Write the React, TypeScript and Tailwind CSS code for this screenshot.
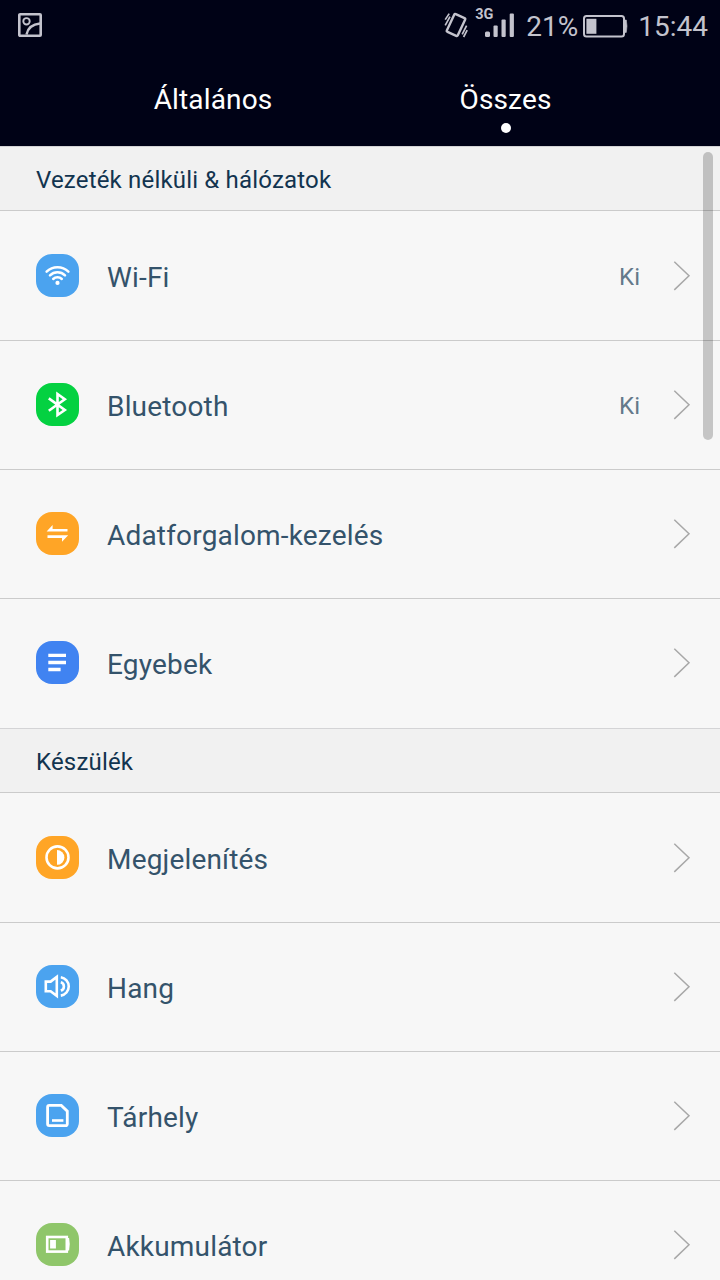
import type { ReactNode } from 'react'

type Item = {
  label: string
  color: string
  icon: ReactNode
  value?: string
}

const wifiIcon = (
  <g fill="none" stroke="#fff" strokeWidth="2.5" strokeLinecap="round">
    <path d="M10.6 17.6a15.6 15.6 0 0 1 21.8 0" />
    <path d="M14 21.4a10.6 10.6 0 0 1 15 0" />
    <path d="M17.2 25a6.2 6.2 0 0 1 8.6 0" />
    <circle cx="21.5" cy="28.9" r="2.1" fill="#fff" stroke="none" />
  </g>
)

const bluetoothIcon = (
  <path
    d="M12.8 15.4 28.8 27 21.5 32V11L28.8 16.2 12.8 27.8"
    fill="none"
    stroke="#fff"
    strokeWidth="2.6"
  />
)

const dataIcon = (
  <path
    d="M10.6 19.6 16.6 13V16.9H31.5V19.6ZM11.5 23.3H32.2L26 29.8V26H11.5Z"
    fill="#fff"
  />
)

const moreIcon = (
  <path d="M12.3 12.7H30v3.4H12.3zM12.3 19.8H30v3.4H12.3zM12.3 26.8H24.6v3.4H12.3z" fill="#fff" />
)

const displayIcon = (
  <g>
    <circle cx="21.5" cy="21.4" r="11" fill="none" stroke="#fff" strokeWidth="2.6" />
    <path d="M21 14a7.4 7.4 0 0 1 0 14.8z" fill="#fff" />
  </g>
)

const soundIcon = (
  <g fill="none" stroke="#fff" strokeWidth="2.6">
    <path d="M9.8 16.6h4.8l6.2-4.7v19l-6.2-4.7H9.8z" />
    <path d="M24.8 12.2a9.3 9.3 0 0 1 0 18.4" />
    <path d="M24.8 17.2a4.4 4.4 0 0 1 0 8.4" />
  </g>
)

const storageIcon = (
  <g fill="none" stroke="#fff">
    <path
      d="M13.2 11.4h12.1l6 5.8v12.9a1.6 1.6 0 0 1-1.6 1.6H13.2a1.6 1.6 0 0 1-1.6-1.6V13a1.6 1.6 0 0 1 1.6-1.6z"
      strokeWidth="2.8"
    />
    <path d="M16 26.5h11.4" strokeWidth="2.6" />
  </g>
)

const batteryIcon = (
  <g>
    <rect x="11.2" y="14" width="19.6" height="14.6" fill="none" stroke="#fff" strokeWidth="2.6" />
    <path d="M14.1 17.1h5.8v8.4h-5.8zM31.3 15h1.8q1.4 6.3 0 12.6h-1.8z" fill="#fff" />
  </g>
)

const sections: { title: string; items: Item[] }[] = [
  {
    title: 'Vezeték nélküli & hálózatok',
    items: [
      { label: 'Wi-Fi', color: 'bg-[#4ba3ef]', icon: wifiIcon, value: 'Ki' },
      { label: 'Bluetooth', color: 'bg-[#04d141]', icon: bluetoothIcon, value: 'Ki' },
      { label: 'Adatforgalom-kezelés', color: 'bg-[#ffa526]', icon: dataIcon },
      { label: 'Egyebek', color: 'bg-[#4083f1]', icon: moreIcon },
    ],
  },
  {
    title: 'Készülék',
    items: [
      { label: 'Megjelenítés', color: 'bg-[#ffa526]', icon: displayIcon },
      { label: 'Hang', color: 'bg-[#4ba3ef]', icon: soundIcon },
      { label: 'Tárhely', color: 'bg-[#4ba3ef]', icon: storageIcon },
      { label: 'Akkumulátor', color: 'bg-[#8fc66a]', icon: batteryIcon },
    ],
  },
]

function StatusBar() {
  return (
    <div className="flex h-[50px] items-center pl-[18px] pr-3 text-[#c3c3cd]">
      <svg className="h-6 w-6" viewBox="0 0 24 24" fill="none" stroke="currentColor">
        <rect x="1.3" y="1.3" width="21.4" height="21.4" rx="0.8" strokeWidth="2.6" />
        <circle cx="8.5" cy="8.3" r="3.2" strokeWidth="1.9" />
        <path d="M8.5 21.5C10 14.8 15 11.2 22 10.6" strokeWidth="2.5" />
      </svg>

      <div className="ml-auto flex items-center">
        {/* Vibrate */}
        <svg className="-mt-px h-[28px] w-[24px]" viewBox="0 0 24 28" fill="none" stroke="currentColor">
          <rect x="6" y="4.2" width="12" height="19.6" rx="1.2" strokeWidth="2.4" transform="rotate(25 12 14)" />
          <path d="M1.2 8.6 5.2 2.6M1.2 14.4 6 5.6M18.2 23.4 22.6 14.6M19.6 26 23.2 19.2" strokeWidth="1.7" />
        </svg>

        {/* Signal */}
        <div className="relative ml-[15px] h-[28px] w-[32px]">
          <span className="absolute -left-[8px] -top-[3px] text-[14.5px] font-bold leading-none">3G</span>
          <svg className="h-[28px] w-[32px]" viewBox="0 0 32 28" fill="currentColor">
            <rect x="2" y="20.5" width="5" height="5.5" rx="1.5" />
            <rect x="10.5" y="14.5" width="4.2" height="11.5" rx="1" />
            <rect x="18.5" y="8.5" width="4.2" height="17.5" rx="1" />
            <rect x="26.7" y="2.5" width="4.2" height="23.5" rx="1" />
          </svg>
        </div>

        <span className="ml-[11px] mt-[4px] w-[57px] text-[28px] leading-8">21%</span>

        <svg className="mt-[2px] h-[23px] w-[45px]" viewBox="0 0 45 23">
          <rect x="1" y="1" width="40" height="20.6" rx="2.5" fill="none" stroke="currentColor" strokeWidth="2" />
          <rect x="3.4" y="3.8" width="10" height="15" fill="currentColor" />
          <path d="M42 5h1.3q1.4 6.2 0 12.4H42z" fill="currentColor" stroke="currentColor" strokeWidth="0.6" />
        </svg>

        <span className="ml-[10px] mt-[4px] text-[28px] leading-8">15:44</span>
      </div>
    </div>
  )
}

function Row({ item }: { item: Item }) {
  return (
    <div className="flex h-[129px] items-start border-t border-[#cbcbcb] pl-9 pr-[29px] pt-[42px] first:border-transparent last:h-[130px]">
      <div className={`h-[43px] w-[43px] rounded-[16px] ${item.color}`}>
        <svg className="h-[43px] w-[43px]" viewBox="0 0 43 43">
          {item.icon}
        </svg>
      </div>
      <span className="ml-7 mt-[2px] text-[28px] leading-[43px] tracking-[0.18px] text-[#34536b]">{item.label}</span>
      <span className="ml-auto mt-[2px] text-[24px] leading-[43px] text-[#64798a]">{item.value}</span>
      <svg
        className="ml-[33px] mt-[6px] h-[31px] w-[18px]"
        viewBox="0 0 18 31"
        fill="none"
        stroke="#a8a8a8"
        strokeWidth="1.5"
      >
        <path d="M1.3 1.7 16 15.8 1.3 29.9" />
      </svg>
    </div>
  )
}

export default function App() {
  return (
    <div className="relative h-[1280px] w-[720px] overflow-hidden bg-[#f7f7f7] font-[Roboto,sans-serif]">
      <header className="h-[146px] bg-[#000216]">
        <StatusBar />
        <div className="flex h-24 px-[60px] text-[28px] tracking-[0.15px] text-white">
          <div className="w-[306px] pt-[30px] text-center leading-10">Általános</div>
          <div className="flex w-[280px] flex-col items-center pt-[30px] leading-10">
            <span className="-ml-px">Összes</span>
            <span className="mt-[3px] h-[10px] w-[10px] rounded-full bg-white" />
          </div>
        </div>
      </header>

      {sections.map((section) => (
        <section key={section.title}>
          <h2 className="h-[65px] border-y border-t-[#d4d4d6] border-b-[#cbcbcb] bg-[#f1f1f1] pl-9 pt-px text-[24px] leading-[64px] tracking-[0.18px] text-[#12344f]">
            {section.title}
          </h2>
          <div>
            {section.items.map((item) => (
              <Row key={item.label} item={item} />
            ))}
          </div>
        </section>
      ))}

      {/* Scrollbar */}
      <div className="absolute right-[7px] top-[152px] h-[288px] w-[10px] rounded-full bg-black/20" />
    </div>
  )
}
